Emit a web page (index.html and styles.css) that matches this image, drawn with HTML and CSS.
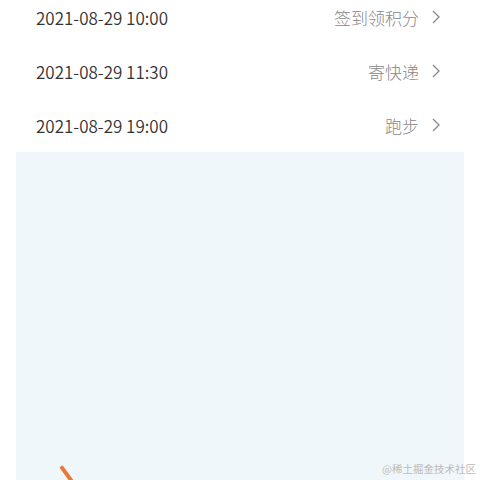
FILE: index.html
```html
<!DOCTYPE html>
<html lang="zh">
<head>
    <meta charset="UTF-8">
    <meta name="viewport" content="width=device-width, initial-scale=1.0">
    <title>日程</title>
    <link rel="stylesheet" href="styles.css">
</head>
<body>

<div class="list">
    <div class="row">
        <span class="time">2021-08-29 10:00</span>
        <span class="task">签到领积分
            <svg class="arrow" viewBox="0 0 8 14"><polyline points="1,1 7,7 1,13"/></svg>
        </span>
    </div>
    <div class="row">
        <span class="time">2021-08-29 11:30</span>
        <span class="task">寄快递
            <svg class="arrow" viewBox="0 0 8 14"><polyline points="1,1 7,7 1,13"/></svg>
        </span>
    </div>
    <div class="row">
        <span class="time">2021-08-29 19:00</span>
        <span class="task">跑步
            <svg class="arrow" viewBox="0 0 8 14"><polyline points="1,1 7,7 1,13"/></svg>
        </span>
    </div>
</div>

<div class="panel">
    <div class="stroke"></div>
</div>

<div class="mark">@稀土掘金技术社区</div>

</body>
</html>
```

FILE: styles.css
```css
body {
    margin: 0;
    height: 480px;
    overflow: hidden;
    background-color: #fff;
    font-family: "Noto Sans CJK SC", sans-serif;
    position: relative;
}
.list {
    margin-top: -10px;
    padding: 0 40px 0 36px;
}
.row {
    height: 54px;
    display: flex;
    align-items: center;
    justify-content: space-between;
}
.time {
    font-size: 17px;
    font-weight: 350;
    color: #333;
}
.task {
    display: flex;
    align-items: center;
    gap: 13px;
    font-size: 17px;
    color: #888;
    font-weight: 300;
}
.arrow {
    width: 8px;
    height: 14px;
    fill: none;
    stroke: #888;
    stroke-width: 1.3;
}
.panel {
    margin: 0 16px;
    height: 328px;
    background-color: #eff7fa;
    position: relative;
    overflow: hidden;
}
.stroke {
    position: absolute;
    left: 50px;
    top: 312px;
    width: 4px;
    height: 24px;
    background-color: #e87a3a;
    transform: rotate(-36deg);
    border-radius: 1px;
}
.mark {
    position: absolute;
    right: 4px;
    bottom: 4px;
    font-size: 10.5px;
    color: #bbb;
}
```
